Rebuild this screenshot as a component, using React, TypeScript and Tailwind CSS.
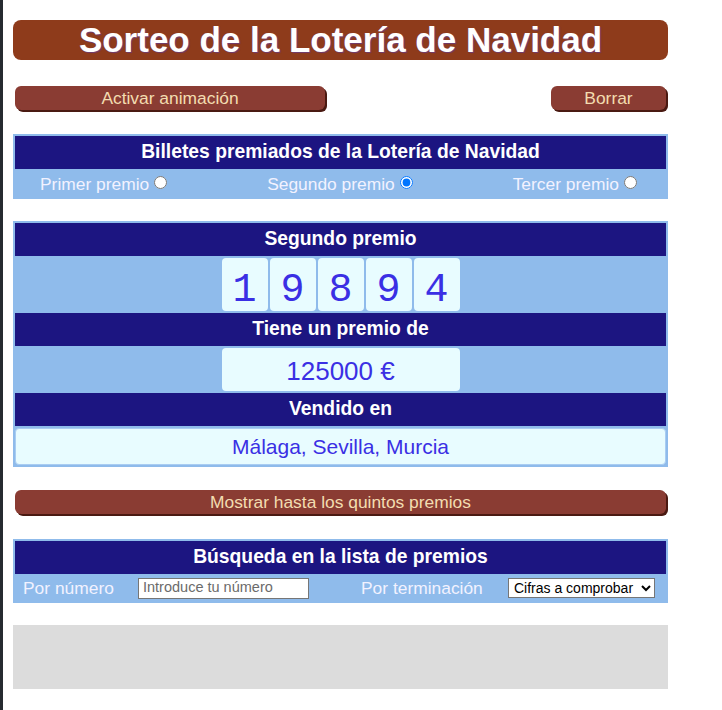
import { useState } from "react";

const premios = ["Primer premio", "Segundo premio", "Tercer premio"];

function Cabecera({ texto }: { texto: string }) {
  return (
    <div className="h-[33px] bg-[#1c1581] text-white font-bold text-[19.3px] flex items-center justify-center">
      {texto}
    </div>
  );
}

function Boton({ texto, className }: { texto: string; className: string }) {
  return (
    <button
      className={
        "h-[24px] rounded-md bg-[#8a3c33] text-[#f3dcb0] text-[17.4px] leading-none pt-[1px] shadow-[2px_2px_0_#4a1a12] " +
        className
      }
    >
      {texto}
    </button>
  );
}

export default function App() {
  const [seleccion, setSeleccion] = useState(1);
  const numero = "19894";

  return (
    <div className="min-h-[710px] bg-white flex font-['Liberation_Sans',Arial,sans-serif]">
      <div className="w-[3px] bg-[#262a30]" />
      <div className="w-[655px] ml-[10px] pt-5">
        <h1 className="h-10 rounded-lg bg-[#8e3b1b] text-white font-bold text-[35px] leading-10 text-center [text-shadow:1px_1px_1px_rgba(90,60,170,0.6)]">
          Sorteo de la Lotería de Navidad
        </h1>

        <div className="mt-[26px] flex justify-between pl-[2px] pr-[2px]">
          <Boton texto="Activar animación" className="w-[310px]" />
          <Boton texto="Borrar" className="w-[115px]" />
        </div>

        <div className="mt-[24px] bg-[#8fbbeb] px-[2px] pt-[2px]">
          <Cabecera texto="Billetes premiados de la Lotería de Navidad" />
          <div className="h-[30px] flex items-center justify-between pl-[25px] pr-[29px] text-[17.4px] text-[#f2f2ff]">
            {premios.map((p, i) => (
              <label key={p} className="flex items-center">
                {p}
                <input
                  type="radio"
                  name="premio"
                  checked={seleccion === i}
                  onChange={() => setSeleccion(i)}
                  className="ml-[5px] mb-[2px]"
                />
              </label>
            ))}
          </div>
        </div>

        <div className="mt-[22px] bg-[#8fbbeb] p-[2px]">
          <Cabecera texto={premios[seleccion]} />
          <div className="flex justify-center gap-[2px] py-[2px]">
            {numero.split("").map((d, i) => (
              <div
                key={i}
                className="w-[46px] h-[53px] rounded bg-[#e8fcff] text-[#3a2fe4] text-[40px] flex items-center justify-center font-['Liberation_Mono',monospace] pt-3"
              >
                {d}
              </div>
            ))}
          </div>
          <Cabecera texto="Tiene un premio de" />
          <div className="flex justify-center py-[2px]">
            <div className="w-[238px] h-[43px] rounded bg-[#e8fcff] text-[#3a2fe4] text-[26px] flex items-center justify-center pt-1">
              125000 €
            </div>
          </div>
          <Cabecera texto="Vendido en" />
          <div className="mt-[2px] h-[37px] rounded border border-[#a9cdf2] bg-[#e8fcff] text-[#3a2fe4] text-[21px] flex items-center justify-center">
            Málaga, Sevilla, Murcia
          </div>
        </div>

        <div className="mt-[23px] px-[2px]">
          <Boton texto="Mostrar hasta los quintos premios" className="w-full" />
        </div>

        <div className="mt-[24px] bg-[#8fbbeb] px-[2px] pt-[2px]">
          <Cabecera texto="Búsqueda en la lista de premios" />
          <div className="h-[29px] flex items-center pl-2 text-[17.4px] text-[#f2f2ff]">
            <span className="w-[115px]">Por número</span>
            <input
              type="text"
              placeholder="Introduce tu número"
              className="w-[171px] h-[21px] border border-[#767676] bg-white px-1 text-[14.5px] text-black placeholder:text-[#6b6b6b]"
            />
            <span className="ml-[52px] w-[147px]">Por terminación</span>
            <select className="w-[147px] h-[20px] border border-[#767676] bg-white pl-[1px] text-[14px] text-black">
              <option>Cifras a comprobar</option>
              <option>1</option>
              <option>2</option>
              <option>3</option>
              <option>4</option>
            </select>
          </div>
        </div>

        <div className="mt-[22px] h-[64px] bg-[#dcdcdc]" />
      </div>
    </div>
  );
}
